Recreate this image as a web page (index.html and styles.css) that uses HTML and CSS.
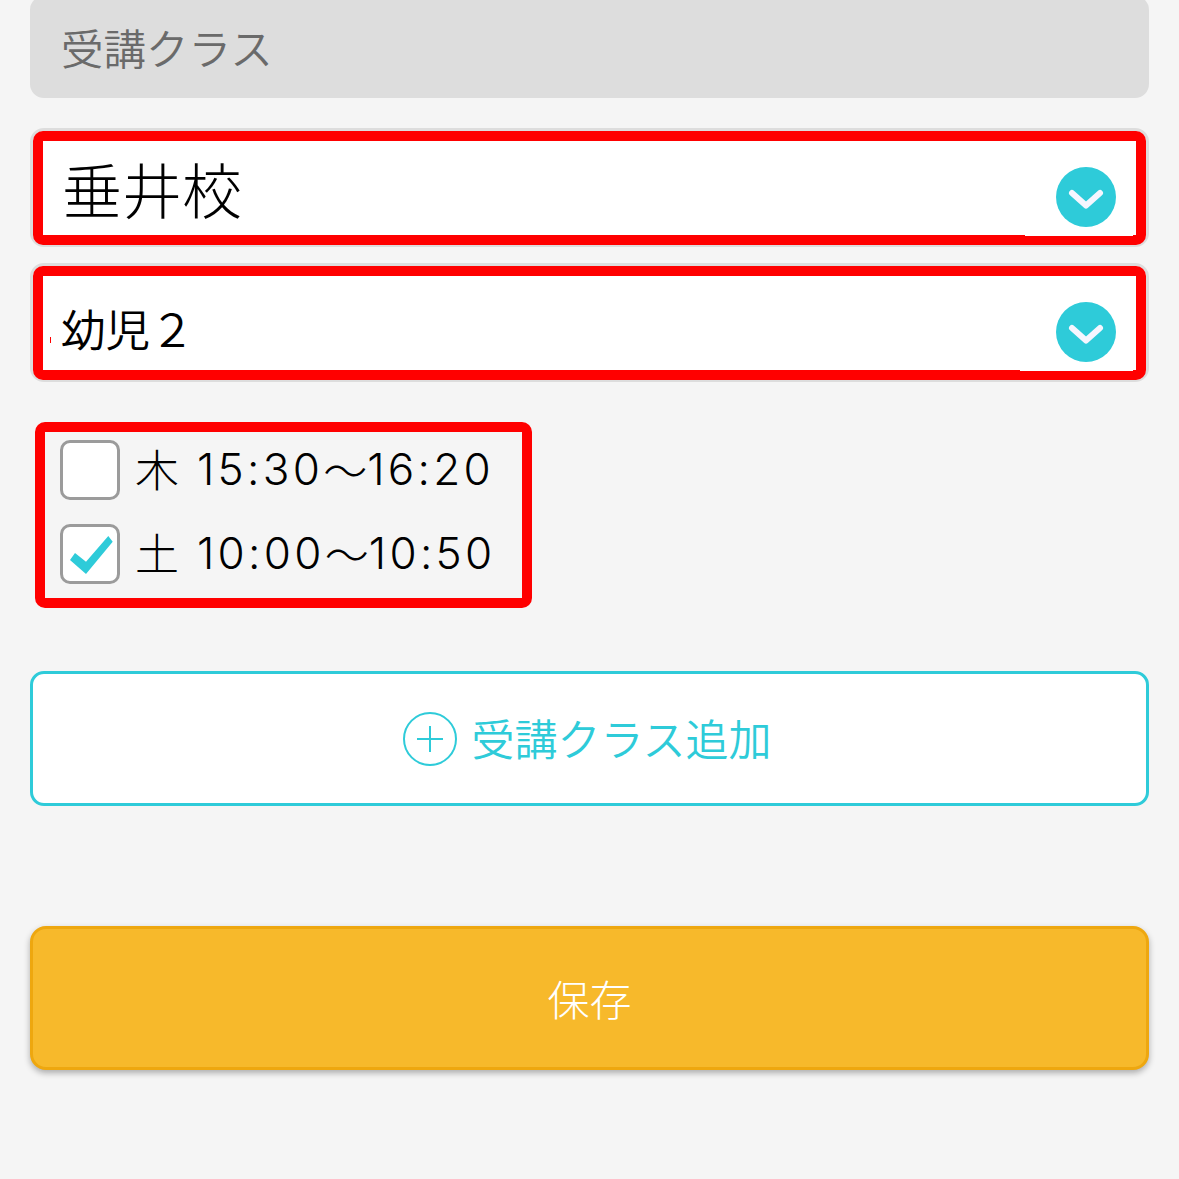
FILE: index.html
```html
<!DOCTYPE html>
<html lang="ja">
<head>
<meta charset="utf-8">
<title>受講クラス</title>
<link rel="stylesheet" href="styles.css">
</head>
<body>
<main class="page">
  <div class="heading"><span>受講クラス</span></div>
  <div class="select">
    <div class="select-inner select-large">
      <span>垂井校</span>
      <svg class="chevron" viewBox="0 0 60 60"><circle cx="30" cy="30" r="30" fill="#2ecbd9"/><path d="M16 26 30 38.500 44 26" fill="none" stroke="#f6f6ff" stroke-width="6" stroke-linecap="round" stroke-linejoin="round"/></svg>
    </div>
  </div>
  <div class="select">
    <div class="select-inner select-small">
      <span class="select-text">幼児２</span>
      <svg class="chevron" viewBox="0 0 60 60"><circle cx="30" cy="30" r="30" fill="#2ecbd9"/><path d="M16 26 30 38.500 44 26" fill="none" stroke="#f6f6ff" stroke-width="6" stroke-linecap="round" stroke-linejoin="round"/></svg>
    </div>
  </div>
  <div class="times">
    <div class="time-row">
      <span class="box"></span>
      <span class="time-label"><span class="day">木</span>15:30<span class="wave">～</span>16:20</span>
    </div>
    <div class="time-row">
      <span class="box">
        <svg class="tick" viewBox="0 0 54 54"><polygon points="12,26 7,33 23,47 49.700,14.700 45.300,9 23,34.700" fill="#2ecbd9"/></svg>
      </span>
      <span class="time-label"><span class="day">土</span>10:00<span class="wave">～</span>10:50</span>
    </div>
  </div>
  <button class="add" type="button">
    <svg class="plus" viewBox="0 0 54 54"><circle cx="27" cy="27" r="26" fill="none" stroke="#2ecbd9" stroke-width="2"/><path d="M14 27H40M27 14V40" fill="none" stroke="#2ecbd9" stroke-width="2"/></svg>
    <span class="add-text">受講クラス追加</span>
  </button>
  <button class="save" type="button"><span class="save-text">保存</span></button>
</main>
</body>
</html>
```

FILE: styles.css
```css
* { box-sizing: border-box; }
html, body { margin: 0; height: 100%; overflow: hidden; }
body {
  background: #f5f5f5;
  color: #000;
  font-family: "Noto Sans CJK JP", "Noto Sans", sans-serif;
  font-weight: 300;
}
.page { display: flex; flex-direction: column; padding: 0 30px; }
.heading {
  height: 102px;
  margin-top: -4px;
  padding-left: 31px;
  display: flex;
  align-items: center;
  background: #dddddd;
  border-radius: 14px;
  color: #6a6a6a;
  font-size: 42.500px;
  font-weight: 350;
  line-height: 1;
}
.select {
  height: 119px;
  margin-top: 30px;
  border: 3px solid #dddddd;
  border-radius: 14px;
  background: #fff;
}
.select + .select { margin-top: 16px; }
.select-inner {
  position: relative;
  height: 114px;
  padding: 0 20px 0 18px;
  display: flex;
  align-items: center;
  justify-content: space-between;
  border: 10px solid #ff0000;
  border-radius: 10px;
  font-size: 44.500px;
  line-height: 1;
}
.select-inner::after {
  content: "";
  position: absolute;
  right: 3px;
  bottom: -1px;
  width: 108px;
  height: 1px;
  background: #fff;
}
.select-small::after { width: 113px; }
.select-small::before {
  content: "";
  position: absolute;
  left: 7px;
  top: 61px;
  width: 1px;
  height: 6px;
  background: #ff0000;
}
.select-large { padding-left: 19px; font-size: 60px; }
.select-text { margin-top: 10px; font-weight: 350; }
.chevron { width: 60px; height: 60px; margin-top: 18px; flex: none; }
.times {
  align-self: flex-start;
  width: 497px;
  height: 186px;
  margin: 40px 0 0 5px;
  padding: 8px 0 0 15px;
  display: flex;
  flex-direction: column;
  gap: 24px;
  border: 10px solid #ff0000;
  border-radius: 10px;
}
.time-row { display: flex; align-items: center; gap: 15px; height: 60px; }
.box {
  width: 60px;
  height: 60px;
  flex: none;
  background: #fff;
  border: 3px solid #9b9b9b;
  border-radius: 10px;
}
.tick { display: block; width: 54px; height: 54px; }
.time-label {
  display: flex;
  align-items: center;
  margin-top: -3px;
  font-family: "Inter", "Noto Sans CJK JP", sans-serif;
  font-size: 44px;
  line-height: 1;
  letter-spacing: 3.300px;
  white-space: nowrap;
}
.day { width: 62px; margin-top: -2px; font-family: "Noto Sans CJK JP", sans-serif; letter-spacing: 0; }
.wave { font-family: "Noto Sans CJK JP", sans-serif; letter-spacing: 0; }
.add, .save { width: 100%; font-family: inherit; font-weight: inherit; }
.add {
  height: 135px;
  margin-top: 63px;
  padding: 0 4px 0 0;
  display: flex;
  align-items: center;
  justify-content: center;
  gap: 14px;
  background: #fff;
  border: 3px solid #2ecbd9;
  border-radius: 14px;
  color: #2ecbd9;
  font-size: 43px;
  font-weight: 350;
  line-height: 1;
}
.add-text { margin-top: -3px; }
.plus { width: 54px; height: 54px; flex: none; }
.save {
  height: 144px;
  margin-top: 120px;
  background: #f7b92b;
  border: 3px solid #eea70f;
  border-radius: 16px;
  box-shadow: 0 3px 6px rgba(0, 0, 0, .3);
  color: #fff;
  font-size: 42px;
}
.save-text { position: relative; top: -1px; }
```
